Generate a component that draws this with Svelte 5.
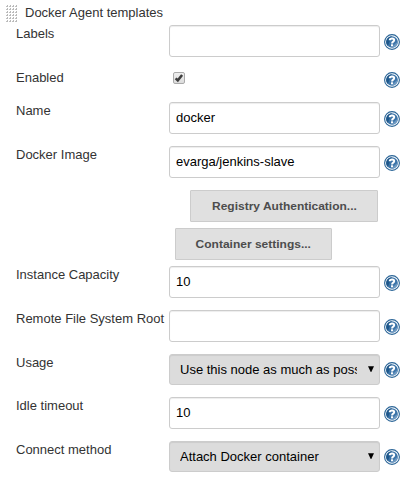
<script>
  const rows = [
    { label: 'Labels', type: 'text', value: '', height: 44 },
    { label: 'Enabled', type: 'check', height: 33 },
    { label: 'Name', type: 'text', value: 'docker', height: 44 },
    { label: 'Docker Image', type: 'text', value: 'evarga/jenkins-slave', height: 44 },
    { type: 'button', kind: 'registry', value: 'Registry Authentication...', height: 38 },
    { type: 'button', kind: 'container', value: 'Container settings...', height: 38 },
    { label: 'Instance Capacity', type: 'text', value: '10', height: 44 },
    { label: 'Remote File System Root', type: 'text', value: '', height: 44 },
    { label: 'Usage', type: 'select', value: 'Use this node as much as possible', height: 43 },
    { label: 'Idle timeout', type: 'text', value: '10', height: 44 },
    { label: 'Connect method', type: 'select', value: 'Attach Docker container', height: 41 }
  ];
  const helpOffset = { text: 9, check: 3, select: 8 };
  const dots = Array.from({ length: 24 }, (_, i) => ({ x: (i % 4) * 3, y: Math.floor(i / 4) * 3 }));
</script>

<div class="form">
  <header>
    <svg class="grip" width="12" height="18" viewBox="0 0 12 18">
      {#each dots as d}
        <rect x={d.x + 1} y={d.y} width="1" height="2" fill="#b8b8b8" />
        <rect x={d.x} y={d.y + 1} width="1" height="1" fill="#c0c0c0" />
      {/each}
    </svg>
    <span>Docker Agent templates</span>
  </header>

  {#each rows as row}
    <div class="row" style="height: {row.height}px">
      <div class="label">{row.label ?? ''}</div>
      <div class="setting">
        {#if row.type === 'text'}
          <input class="text" type="text" value={row.value} aria-label={row.label} />
        {:else if row.type === 'check'}
          <span class="check" role="checkbox" aria-checked="true" aria-label={row.label} tabindex="0">
            <svg width="10" height="10" viewBox="0 0 10 10">
              <path d="M1.6 5.4L3.8 7.4L8.1 2" fill="none" stroke="#3d3d3d" stroke-width="2.5" />
            </svg>
          </span>
        {:else if row.type === 'select'}
          <div class="select">
            <span class="chosen">{row.value}</span>
            <svg width="6" height="7" viewBox="0 0 6 7"><path d="M0 0.2H6L3.3 6H2.7z" fill="#000" /></svg>
          </div>
        {:else}
          <button class={row.kind}><span class="caption">{row.value}</span></button>
        {/if}
      </div>
      {#if row.label}
        <svg class="help" style="margin-top: {helpOffset[row.type]}px" width="16" height="16" viewBox="0 0 16 16">
          <circle cx="8" cy="8" r="7.4" fill="#fff" stroke="#2b6597" stroke-width="1.1" />
          <circle cx="8" cy="8" r="5.8" fill="#3c74a8" />
          <path d="M3.9 12.1A5.8 5.8 0 0 1 8 2.2Q5.5 7 3.9 12.1z" fill="#1d578b" />
          <path d="M8 13.8A5.8 5.8 0 0 0 13.8 8Q11 9 8 13.8z" fill="#6c98c1" />
          <path d="M5.7 6.3Q5.8 4.4 8 4.4Q10.2 4.4 10.2 6.1Q10.2 7.1 8.9 7.9Q8.1 8.4 8.1 9.4" fill="none" stroke="#fff" stroke-width="2" />
          <rect x="7" y="10.3" width="2.1" height="2" fill="#fff" />
        </svg>
      {/if}
    </div>
  {/each}
</div>

<style>
  :global(body) {
    background: #fff;
  }

  .form {
    box-sizing: border-box;
    width: 414px;
    height: 482px;
    overflow: hidden;
    font: 13px/17px "Liberation Sans", Arial, sans-serif;
    color: #333;
  }

  header {
    display: flex;
    gap: 7px;
    height: 21px;
    padding: 4px 0 0 6px;
  }

  .grip {
    margin-top: 1px;
  }

  .row {
    display: flex;
    align-items: flex-start;
    padding-left: 16px;
  }

  .label {
    width: 153px;
    flex: none;
    white-space: nowrap;
  }

  .setting {
    display: flex;
    width: 211px;
    flex: none;
  }

  .text,
  .select {
    box-sizing: border-box;
    width: 211px;
    border: 1px solid #ccc;
    border-radius: 3px;
    box-shadow: inset 0 1px 1px rgba(0, 0, 0, 0.075);
    color: #000;
    font: inherit;
  }

  .text {
    height: 32px;
    margin: 0;
    padding: 0 6px 1px;
    background: #fff;
    outline: none;
  }

  .select {
    display: flex;
    align-items: center;
    height: 31px;
    padding: 0 5px 0 10px;
    background: #dcdcdc;
  }

  .chosen {
    width: 177px;
    flex: none;
    margin-right: 11px;
    overflow: hidden;
    white-space: nowrap;
  }

  .select svg {
    flex: none;
  }

  .check {
    box-sizing: border-box;
    display: flex;
    width: 12px;
    height: 12px;
    margin: 3px 0 0 4px;
    border: 1px solid #aaa;
    border-radius: 2px;
    background: linear-gradient(#eee, #dcdcdc);
  }

  button {
    box-sizing: border-box;
    height: 32px;
    padding: 0;
    border: 1px solid #ccc;
    border-radius: 1px;
    background: #e0e0e0;
    color: #4d4d4d;
    font: bold 11.5px/30px "Liberation Sans", Arial, sans-serif;
    white-space: nowrap;
  }

  .caption {
    display: inline-block;
    transform: scaleX(1.043);
  }

  .registry {
    width: 188px;
    margin-left: 21px;
  }

  .container {
    width: 157px;
    margin-left: 6px;
  }

  .help {
    flex: none;
    margin-left: 4px;
  }
</style>
